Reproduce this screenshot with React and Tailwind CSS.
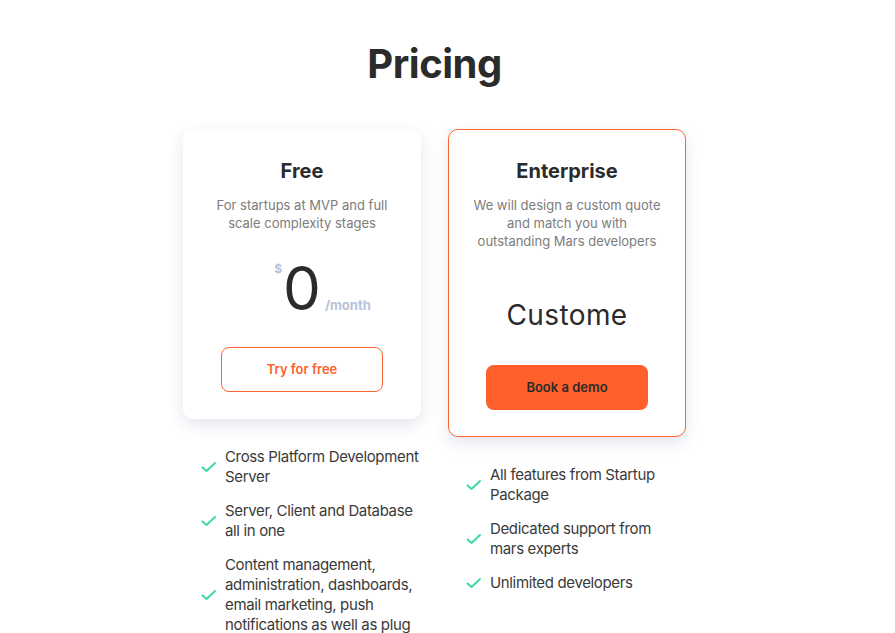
import React from 'react';

const plans = [
  {
    name: 'Free',
    description: ['For startups at MVP and full', 'scale complexity stages'],
    price: '0',
    cta: 'Try for free',
    featured: false,
    features: [
      'Cross Platform Development Server',
      'Server, Client and Database all in one',
      'Content management, administration, dashboards, email marketing, push notifications as well as plug',
    ],
  },
  {
    name: 'Enterprise',
    description: ['We will design a custom quote', 'and match you with', 'outstanding Mars developers'],
    price: null,
    cta: 'Book a demo',
    featured: true,
    features: [
      'All features from Startup Package',
      'Dedicated support from mars experts',
      'Unlimited developers',
    ],
  },
];

const Check = () => (
  <svg width="16" height="12" viewBox="0 0 16 12" fill="none" className="shrink-0">
    <path d="M1.5 6.5 L5.5 10 L14 2" stroke="#3fd9a8" strokeWidth="2" strokeLinecap="round" strokeLinejoin="round" />
  </svg>
);

const PlanCard = ({ plan }) => (
  <div className="w-[238px] flex flex-col">
    <div
      className={
        plan.featured
          ? 'rounded-[10px] border border-[#ff6231] bg-white px-[20px] pt-[27px] pb-[26px] flex flex-col items-center shadow-[0_6px_16px_rgba(90,100,150,0.16)]'
          : 'rounded-[10px] bg-white px-[20px] pt-[28px] pb-[27px] flex flex-col items-center shadow-[0_6px_16px_rgba(90,100,150,0.16)]'
      }
    >
      <h3 className="text-[20px] leading-[28px] font-bold text-[#2b2b2b]">{plan.name}</h3>
      <p className="mt-[11px] text-[13px] leading-[18px] text-[#7c7c7c] text-center">
        {plan.description.map((line, i) => (
          <span key={i} className="block">{line}</span>
        ))}
      </p>

      {plan.price !== null ? (
        <div className="mt-[24px] h-[64px] flex justify-center">
          <div className="relative">
            <span className="absolute right-full top-[4px] mr-[1px] text-[12px] font-bold text-[#b5c3d8]">$</span>
            <span className="text-[60px] leading-[64px] font-normal text-[#2b2b2b]">{plan.price}</span>
            <span className="absolute left-full bottom-[5px] ml-[4px] text-[13px] font-bold text-[#b5c3d8]">/month</span>
          </div>
        </div>
      ) : (
        <div className="mt-[24px] h-[64px] flex items-end justify-center pb-[6px]">
          <span className="text-[28px] leading-[34px] text-[#2b2b2b] tracking-[0.4px]">Custome</span>
        </div>
      )}

      <button
        className={
          plan.featured
            ? 'mt-[27px] w-[162px] h-[45px] rounded-[8px] bg-[#ff5f2a] text-[13px] font-semibold text-[#2b2b2b]'
            : 'mt-[27px] w-[162px] h-[45px] rounded-[8px] border border-[#ff6231] bg-white text-[13px] font-semibold text-[#ff5f2a]'
        }
      >
        {plan.cta}
      </button>
    </div>

    <ul className="mt-[28px] pl-[18px] flex flex-col gap-[14px]">
      {plan.features.map((f) => (
        <li key={f} className="flex items-center gap-[8px]">
          <Check />
          <span className="text-[15px] leading-[20px] tracking-[-0.35px] text-[#3a3a3a]">{f}</span>
        </li>
      ))}
    </ul>
  </div>
);

export default function App() {
  return (
    <div className="min-h-screen bg-white font-['Inter',sans-serif] pr-[26px] pt-[36px]">
      <h2 className="text-center text-[40px] leading-[56px] font-bold text-[#2b2b2b] tracking-[-0.5px]">Pricing</h2>
      <div className="mt-[37px] flex justify-center items-start gap-[27px]">
        {plans.map((p) => (
          <PlanCard key={p.name} plan={p} />
        ))}
      </div>
    </div>
  );
}
